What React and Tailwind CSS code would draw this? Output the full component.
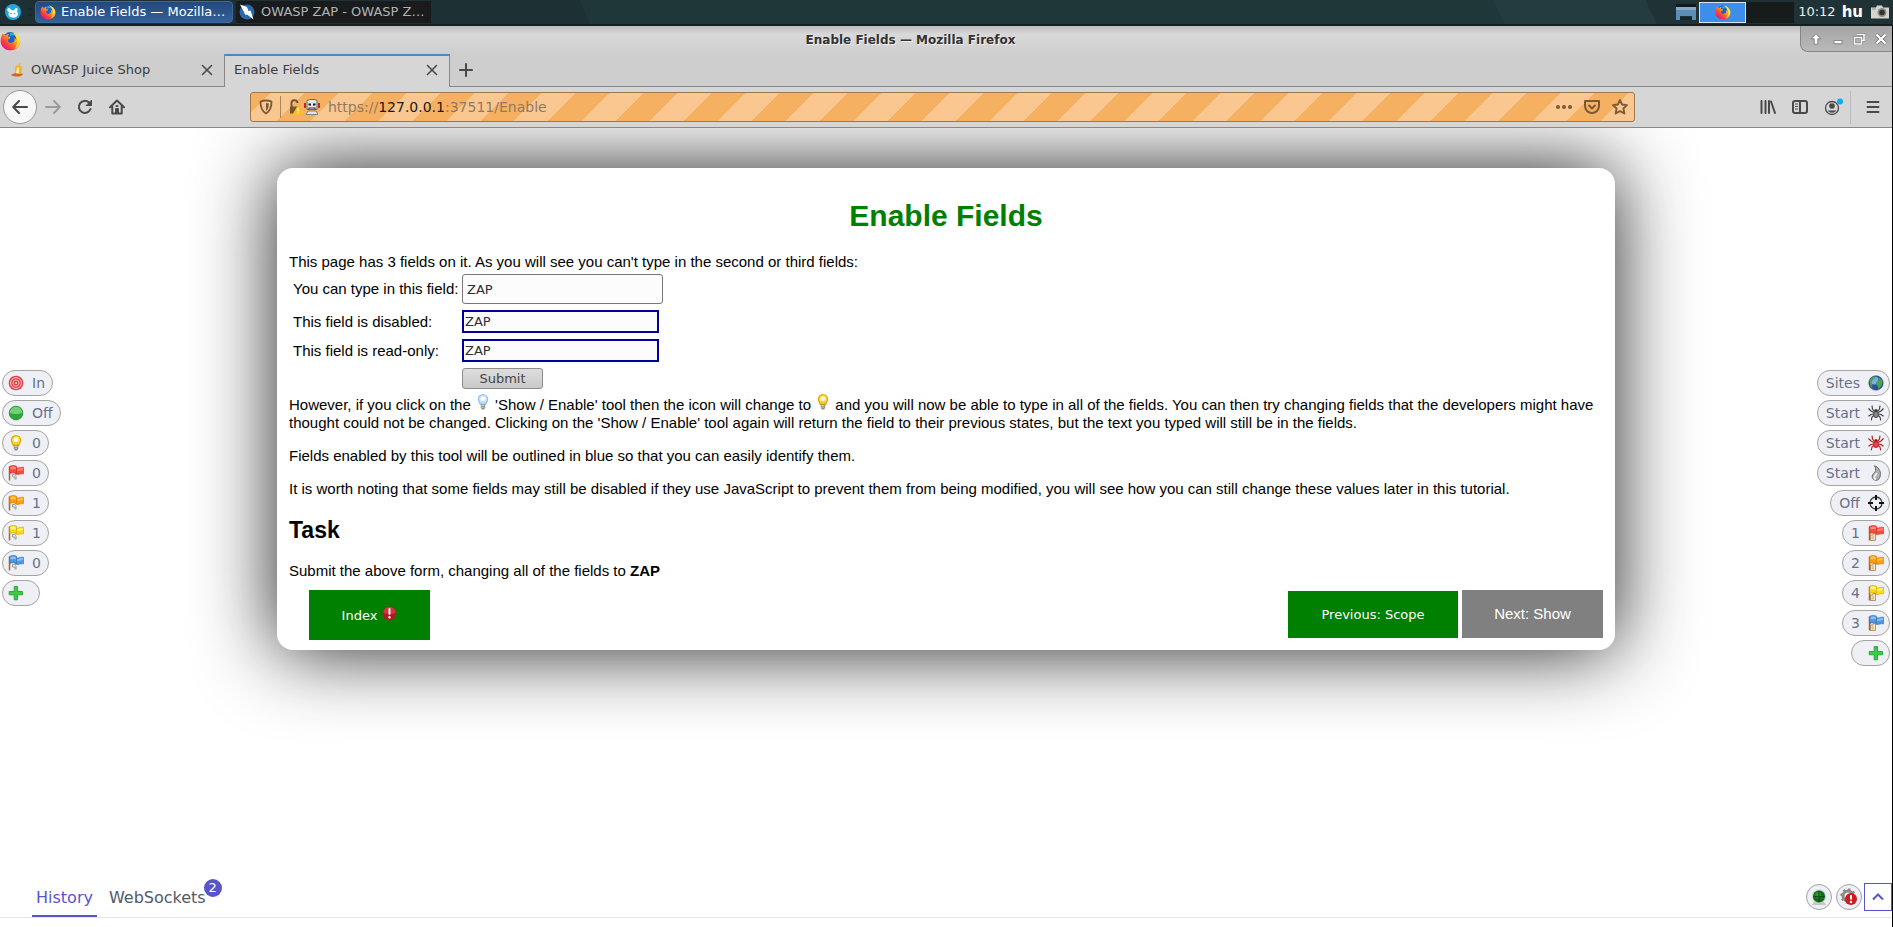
import React from "react";

const stroke = { fill: "none", stroke: "#4a4a4a", strokeWidth: 2, strokeLinecap: "round", strokeLinejoin: "round" };

function Firefox({ size = 16 }) {
  return (
    <svg width={size} height={size} viewBox="0 0 32 32" aria-hidden="true" className="shrink-0">
      <defs>
        <linearGradient id="fx-body" x1="0.9" y1="0.1" x2="0.15" y2="0.9">
          <stop offset="0" stopColor="#fff23a" />
          <stop offset="0.4" stopColor="#ff9a1e" />
          <stop offset="0.75" stopColor="#ff3b3f" />
          <stop offset="1" stopColor="#e0128a" />
        </linearGradient>
      </defs>
      <circle cx="16" cy="15" r="12" fill="#1b62c9" />
      <path d="M16 4a11 11 0 0 1 9 6l-5-2-6 1z" fill="#2aa7f0" />
      <path d="M4 5c1 1 2 2 4 3 1-1 4-2 6-2-1 1-2 2-2 4l4 1c0 2-2 3-4 4 0 4 4 6 7 4 3-1 4-4 3-7 2 1 2 2 3 3 0-5-3-9-7-12 6 1 13 7 13 14 0 8-7 14-15 14S1 25 1 17c0-5 1-8 3-12z" fill="url(#fx-body)" />
      <path d="M23 5c5 3 8 8 7 14-1 5-4 8-8 10 4-5 6-12 1-24z" fill="#ffe53b" opacity="0.8" />
    </svg>
  );
}

function MouseLogo() {
  return (
    <svg width="16" height="16" viewBox="0 0 16 16" aria-hidden="true" className="shrink-0">
      <circle cx="8" cy="8" r="8" fill="#25a6dc" />
      <path d="M2.500 5c.5-1.500 2-1.500 3 0L7 6.500c.8-.3 1.500-.3 2.200 0 .3-2 1.800-3 2.800-2.200 1 .8.700 2.200-.2 2.900 1.400 1 1.800 3 .7 4.500-1 1.300-2.500 1.800-4.500 1.800s-4.500-1-4.500-3.300c0-1 .2-1.500.7-2.200C3 7.500 2 6.500 2.500 5z" fill="#fff" />
      <circle cx="6" cy="9.500" r="0.800" fill="#25a6dc" />
      <circle cx="9.500" cy="9.500" r="0.800" fill="#25a6dc" />
    </svg>
  );
}

function ZapLogo() {
  return (
    <svg width="16" height="16" viewBox="0 0 16 16" aria-hidden="true" className="shrink-0">
      <circle cx="8" cy="8" r="7.500" fill="#2a69ae" />
      <path d="M1 .5l7 2.500 1.500 4 2-.5 3 9-6.500-5-1.500.5z" fill="#fff" />
    </svg>
  );
}

function JuiceLogo() {
  return (
    <svg width="14" height="14" viewBox="0 0 14 14" aria-hidden="true">
      <path d="M5 2.500h2L8.500 0l1 .5L8.500 3h2v8H4V6z" fill="#f0b429" />
      <path d="M6 4.500h2V10H5z" fill="#ffe9a0" />
      <path d="M0 12c1.500-1.500 3-1 4-2 2 1.500 5 1 7.500.5 1 1.500-1.500 3-5 3-2 0-4.500 0-6.500-1.500z" fill="#d5602f" />
    </svg>
  );
}

function Close() {
  return (
    <svg width="12" height="12" viewBox="0 0 12 12" aria-hidden="true">
      <path d="M1.500 1.500l9 9M10.500 1.500l-9 9" stroke="#4a4a4a" strokeWidth="1.600" strokeLinecap="round" />
    </svg>
  );
}

function Bulb({ on, size = 16 }) {
  const edge = on ? "#e2a800" : "#8fc1ee";
  const fill = on ? "#ffe23c" : "#d3e8ff";
  return (
    <svg width={size} height="16" viewBox="0 0 16 16" role="img" aria-label={on ? "lit bulb" : "unlit bulb"} className="inline-block align-baseline">
      <path d="M8 .7a4.600 4.600 0 0 1 4.600 4.600c0 1.800-1.400 2.500-1.900 5.200H5.300C4.800 7.800 3.400 7.100 3.400 5.300A4.600 4.600 0 0 1 8 .7z" fill={fill} stroke={edge} strokeWidth="1.300" />
      <circle cx="8" cy="4.800" r="2.400" fill="#fff" />
      <path d="M6.800 10V7M9.200 10V7" stroke={edge} strokeWidth=".7" />
      <path d="M5.800 10.500h4.400v3.200L9 15.500H7l-1.200-1.800z" fill="#8c8c84" />
      <path d="M6.300 11.500h3M6.300 13.200h3" stroke="#e8e8e2" strokeWidth=".7" />
    </svg>
  );
}

const flagColors = {
  red: ["#fb4a3e", "#ff8d7c", "#d9291c"],
  orange: ["#ff9d0a", "#ffc35c", "#d97800"],
  yellow: ["#ffd90a", "#fff4a0", "#d0a500"],
  blue: ["#4f97e0", "#8fc0f3", "#2a6cb8"],
};

function Flag({ color, site }) {
  const [base, light, dark] = flagColors[color];
  return (
    <svg width="16" height="16" viewBox="0 0 16 16" aria-hidden="true">
      <path d="M1.500 1.500v14" stroke="#a8642a" strokeWidth="1.500" />
      <path d="M7 2.500c3 1.500 5-.7 8.500-.3v6.600c-3-.6-5.500 1.500-8.500.2z" fill={base} stroke={dark} strokeWidth=".6" />
      <path d="M1.800 1.200C4 .2 6.500.2 8.500 1.200v7.200C6.500 7.300 4 7.500 1.800 8.500z" fill={base} stroke={dark} strokeWidth=".6" />
      <path d="M2.500 2.200c2-.8 3.600-.8 5.300 0v2.300c-1.800-.7-3.500-.6-5.300.1zM9.200 4c2 .4 3.600-.8 5.600-.9v2c-2 0-3.600 1.300-5.600.9z" fill={light} />
      {site ? (
        <g>
          <path d="M2.500 10h2.500V8.500h2.500V15.500h-5z" fill="#f6e8c8" stroke="#a37b42" strokeWidth=".8" />
          <path d="M3.500 12h2.500M3.500 13.800h2.500" stroke="#b98f55" strokeWidth=".7" />
        </g>
      ) : (
        <path d="M4.500 9.500h2l1.500 1.800v3.200M4.500 9.500v2.500h2.500v2.500" fill="#fff" stroke="#84918c" strokeWidth=".9" />
      )}
    </svg>
  );
}

function Plus() {
  return (
    <svg width="16" height="16" viewBox="0 0 16 16" aria-hidden="true">
      <path d="M6.200 1.500h3.300V6.500h5v3.300h-5v5H6.200v-5H1.200V6.500h5z" fill="#3ecb45" stroke="#159a20" strokeWidth=".8" />
    </svg>
  );
}

function Target() {
  return (
    <svg width="16" height="16" viewBox="0 0 16 16" aria-hidden="true">
      <circle cx="8" cy="8" r="7.300" fill="#e03c40" />
      <circle cx="8" cy="8" r="5.400" fill="none" stroke="#fbd9d7" strokeWidth="1" />
      <circle cx="8" cy="8" r="3.100" fill="none" stroke="#fbd9d7" strokeWidth="1" />
      <circle cx="8" cy="8" r=".9" fill="#fff" />
    </svg>
  );
}

function GreenBall() {
  return (
    <svg width="16" height="16" viewBox="0 0 16 16" aria-hidden="true">
      <circle cx="8" cy="8" r="7" fill="#2fa53c" />
      <path d="M1.600 8a6.400 6.400 0 0 1 12.800 0c-4 1.200-8.800 1.200-12.800 0z" fill="#72cf75" />
      <circle cx="8" cy="8" r="6.800" fill="none" stroke="#1e8b2f" strokeWidth=".7" />
    </svg>
  );
}

function Globe() {
  return (
    <svg width="16" height="16" viewBox="0 0 16 16" aria-hidden="true">
      <circle cx="8" cy="8" r="7.200" fill="#2f4f9e" />
      <circle cx="6.500" cy="5.500" r="4" fill="#7fabea" />
      <path d="M2 4.500C3.500 2.300 5 1.300 7.500 1.300L7 3 5 4.500 4 6.500 3 8l1.500 2-.5 3C2.500 11.500 1 8 2 4.500zM9.500 2c3.200.8 5.200 3.500 5.200 6L12.500 12l-2 2-1-3.500L7.500 9 9 6l2.500-1z" fill="#46a648" />
      <circle cx="8" cy="8" r="7.200" fill="none" stroke="#27406f" strokeWidth=".6" />
    </svg>
  );
}

function Spider({ color, body }) {
  return (
    <svg width="16" height="16" viewBox="0 0 16 16" aria-hidden="true">
      <path d="M6.500 6.500L4.500 4 4 .7M9.500 6.500l2-2.500.5-3.300M6 7.500L3 6 .5 3.500M10 7.500L13 6l2.500-2.500M6 9l-3 .5-2.500 1.800M10 9l3 .5 2.500 1.800M6.500 10L4 12l-.7 3.300M9.500 10l2.500 2 .7 3.300" fill="none" stroke={color} strokeWidth="1.100" />
      <ellipse cx="8" cy="9.500" rx="2.400" ry="3.200" fill={body} stroke={color} strokeWidth=".8" />
      <circle cx="8" cy="5.600" r="1.700" fill={color} />
    </svg>
  );
}

function Flame() {
  return (
    <svg width="16" height="16" viewBox="0 0 16 16" aria-hidden="true">
      <path d="M6.500.7c4 1.500 6.200 5 5.900 9-.2 3.400-2 5.600-4.200 5.600-2.500 0-4.200-1.900-4-4.300.2-2 2-2.600 3-4.200 1-1.600.4-4-.7-6.100z" fill="#b0b0b0" stroke="#666" strokeWidth="1" />
      <path d="M8.500 8c.3 2-2.200 2.500-2.200 4.200 0 1.200.7 2 1.700 2" fill="none" stroke="#f8f8f8" strokeWidth="1.500" />
    </svg>
  );
}

function Crosshair() {
  return (
    <svg width="16" height="16" viewBox="0 0 16 16" aria-hidden="true">
      <circle cx="8" cy="8" r="6" fill="none" stroke="#3a3a3a" strokeWidth="1.300" />
      <path d="M8 0v5M8 11v5M0 8h5M11 8h5" stroke="#111" strokeWidth="2" />
    </svg>
  );
}

function Alert({ size = 14 }) {
  return (
    <svg width={size} height={size} viewBox="0 0 14 14" aria-hidden="true" className="mb-1.5">
      <circle cx="7" cy="7" r="6.500" fill="#b5171c" />
      <path d="M1.200 6.500a5.800 5.800 0 0 1 11.600 0c-3 1.200-8 1.200-11.600 0z" fill="#c9383b" />
      <path d="M7 2.800v4.700" stroke="#fff" strokeWidth="1.800" strokeLinecap="round" />
      <circle cx="7" cy="10.500" r="1.100" fill="#fff" />
    </svg>
  );
}

const pill =
  "flex h-[26px] items-center gap-2 rounded-full border border-[#a3a3a3] bg-[#eff0f5] text-[14px] text-[#66708c]";

const leftTools = [
  { text: "In", name: "Scope", icon: <Target /> },
  { text: "Off", name: "Break", icon: <GreenBall /> },
  { text: "0", name: "Show / Enable", icon: <Bulb on /> },
  { text: "0", name: "Page alerts, high", icon: <Flag color="red" /> },
  { text: "1", name: "Page alerts, medium", icon: <Flag color="orange" /> },
  { text: "1", name: "Page alerts, low", icon: <Flag color="yellow" /> },
  { text: "0", name: "Page alerts, informational", icon: <Flag color="blue" /> },
  { text: "", name: "Add tool on the left", icon: <Plus /> },
];

const rightTools = [
  { text: "Sites", name: "Sites tree", icon: <Globe /> },
  { text: "Start", name: "Spider", icon: <Spider color="#3a3a3a" body="#8a8a8a" /> },
  { text: "Start", name: "Ajax spider", icon: <Spider color="#b3151b" body="#e24a4a" /> },
  { text: "Start", name: "Active scan", icon: <Flame /> },
  { text: "Off", name: "Attack mode", icon: <Crosshair /> },
  { text: "1", name: "Site alerts, high", icon: <Flag color="red" site /> },
  { text: "2", name: "Site alerts, medium", icon: <Flag color="orange" site /> },
  { text: "4", name: "Site alerts, low", icon: <Flag color="yellow" site /> },
  { text: "3", name: "Site alerts, informational", icon: <Flag color="blue" site /> },
  { text: "", name: "Add tool on the right", icon: <Plus /> },
];

function Taskbar() {
  return (
    <header className="flex h-[26px] items-center border-b-2 border-[#14201f] bg-[#20363a] bg-[linear-gradient(65deg,#1d3033_0_31%,#20373a_31%_79%,#243c40_79%_87%,#1f3236_87%)] pl-[5px] text-[13px]">
      <button aria-label="Applications"><MouseLogo /></button>
      <span className="ml-[7px] h-2 w-1 border-y-2 border-[#15282a]" />
      <button className="ml-[3px] flex h-[22px] w-[198px] items-center gap-[5px] rounded-sm border border-[#3b6aa0] bg-gradient-to-b from-[#24487a] to-[#34619a] pl-1 text-white">
        <Firefox size={16} />
        <span className="truncate">Enable Fields — Mozilla…</span>
      </button>
      <button className="ml-[3px] flex h-[22px] w-[195px] items-center gap-[6px] bg-[#191b1c] pl-[3px] text-[#b3b3b3]">
        <ZapLogo />
        <span className="truncate">OWASP ZAP - OWASP Z…</span>
      </button>
      <div className="flex-1" />
      <svg width="20" height="16" viewBox="0 0 20 16" aria-hidden="true">
        <path d="M0 0h20v3H0z" fill="#101a1c" />
        <path d="M0 3h20v13h-4v-4H4v4H0z" fill="#5d8cb4" />
        <path d="M0 3h20v3H0z" fill="#86a9c8" />
        <path d="M4 13h12v3H4z" fill="#182629" />
      </svg>
      <button aria-label="Workspace 1" className="ml-[3px] flex h-[21px] w-[47px] items-center justify-center border border-[#d5e4f7] bg-[#3d8eea]">
        <Firefox size={16} />
      </button>
      <button aria-label="Workspace 2" className="h-[21px] w-[48px] bg-[#181b1c]" />
      <span className="ml-1 text-[13px] text-[#e8eded]">10:12</span>
      <span className="ml-[6px] text-[15px] font-bold text-white">hu</span>
      <svg width="18" height="14" viewBox="0 0 18 13" aria-hidden="true" className="mr-1 ml-2">
        <path d="M0 2h5l1-2h5l1 2h6v11H0z" fill="#d4d4d0" />
        <circle cx="11" cy="7" r="4.500" fill="#8b8b88" />
        <circle cx="11" cy="7" r="2.800" fill="#333" />
        <path d="M1 3.500h4" stroke="#8b8b88" />
      </svg>
    </header>
  );
}

function TitleBar() {
  return (
    <div className="flex h-7 items-start bg-gradient-to-b from-[#bdbbbc] via-[#d9d9d9] via-30% to-[#cecece]">
      <div className="pt-1"><Firefox size={21} /></div>
      <p className="flex-1 pt-[7px] text-center text-[12px] leading-[15px] font-bold text-[#333] [text-shadow:1px_1px_0_#f2f2f2]">
        Enable Fields — Mozilla Firefox
      </p>
      <div className="flex h-[26px] w-[92px] items-center justify-around rounded-bl-lg border-b border-l border-[#858585] bg-gradient-to-b from-[#a5a5a5] to-[#b9b9b9] pl-1">
        <button aria-label="Shade">
          <svg width="12" height="12" viewBox="0 0 12 12"><path d="M6 .8l4.800 5H7.800v5.400H4.200V5.800h-3z" fill="#fff" stroke="#666" strokeWidth=".7" /></svg>
        </button>
        <button aria-label="Minimize">
          <svg width="12" height="12" viewBox="0 0 12 12"><path d="M2 7.500h8v3.200H2z" fill="#fff" stroke="#666" strokeWidth=".7" /></svg>
        </button>
        <button aria-label="Restore">
          <svg width="12" height="12" viewBox="0 0 12 12"><path d="M4 1.500h7v6H9M1.500 4.500h7v6.500h-7z" fill="none" stroke="#666" strokeWidth="2.600" /><path d="M4 1.500h7v6H9M1.500 4.500h7v6.500h-7z" fill="none" stroke="#fff" strokeWidth="1.600" /></svg>
        </button>
        <button aria-label="Close window">
          <svg width="12" height="12" viewBox="0 0 12 12"><path d="M1.500 1.500l9 9M10.500 1.500l-9 9" stroke="#666" strokeWidth="3.600" /><path d="M1.500 1.500l9 9M10.500 1.500l-9 9" stroke="#fff" strokeWidth="2.400" /></svg>
        </button>
      </div>
    </div>
  );
}

function TabStrip() {
  return (
    <nav aria-label="Browser tabs" className="flex h-[33px] bg-[#cecece] text-[13px] text-[#3c3c3c]">
      <div className="flex w-56 items-center border-b border-[#888] pr-[11px] pl-[11px]">
        <JuiceLogo />
        <span className="ml-[6px] flex-1">OWASP Juice Shop</span>
        <button aria-label="Close OWASP Juice Shop"><Close /></button>
      </div>
      <div className="flex w-[226px] items-center border-x border-t-2 border-x-[#888] border-t-[#4e86c0] bg-[#d6d6d6] pr-[11px] pb-[3px] pl-[9px]">
        <span className="flex-1">Enable Fields</span>
        <button aria-label="Close Enable Fields"><Close /></button>
      </div>
      <div className="flex flex-1 items-center border-b border-[#888] pl-[9px]">
        <button aria-label="New tab">
          <svg width="14" height="14" viewBox="0 0 14 14"><path d="M7 1v12M1 7h12" stroke="#4a4a4a" strokeWidth="2" strokeLinecap="round" /></svg>
        </button>
      </div>
    </nav>
  );
}

function NavBar() {
  return (
    <div className="flex h-[41px] items-center border-b border-[#888] bg-[#d6d6d6]">
      <button aria-label="Back" className="ml-[3px] flex size-[34px] items-center justify-center rounded-full border border-[#999] bg-[#f8f8f8]">
        <svg width="16" height="16" viewBox="0 0 16 16" {...stroke}><path d="M15 8H1.500M7 2L1.200 8 7 14" /></svg>
      </button>
      <button aria-label="Forward" className="ml-2">
        <svg width="16" height="16" viewBox="0 0 16 16" {...stroke} stroke="#9c9c9c"><path d="M1 8h13.500M9 2l5.800 6L9 14" /></svg>
      </button>
      <button aria-label="Reload" className="ml-4">
        <svg width="16" height="16" viewBox="0 0 16 16" {...stroke}><path d="M13.500 10A6 6 0 1 1 12 3.500l2 2" /><path d="M14.500 1.500v5h-5z" fill="#4a4a4a" strokeWidth="1" /></svg>
      </button>
      <button aria-label="Home" className="ml-4">
        <svg width="16" height="16" viewBox="0 0 16 16" {...stroke}><path d="M1 8.200L8 1.500l7 6.700M3.300 7.500V14.500h9.400V7.500" /><path d="M7 14v-4h2v4M7.500 7h1" /></svg>
      </button>
      <div className="ml-[125px] flex h-[30px] flex-1 items-center rounded-[3px] border border-[#a0764a] bg-[repeating-linear-gradient(-45deg,#f9c78f_0_24px,#f6b061_24px_48px)] pr-[6px] pl-2">
        <svg width="14" height="16" viewBox="0 0 14 16" aria-hidden="true"><path d="M7 1.500c2 0 4 .3 5.500 1 0 5-1 9.500-5.500 12-4.500-2.500-5.500-7-5.500-12 1.500-.7 3.500-1 5.500-1z" fill="none" stroke="#7b5937" strokeWidth="1.800" /><path d="M7 4v8c2-1.500 2.700-4 2.800-7.500z" fill="#7b5937" /></svg>
        <span className="mx-[7px] h-[22px] w-px bg-[#a9855c]" />
        <svg width="16" height="16" viewBox="0 0 16 16" aria-hidden="true"><path d="M3.500 8V4.500a3 3 0 0 1 6-.5" fill="none" stroke="#735532" strokeWidth="2" /><path d="M2 7.500h8v7H2z" fill="#735532" /><path d="M10 6l5.500 9.500h-11z" fill="#ffbf1a" /><path d="M10 9v3.500M10 13.500v1" stroke="#fff" strokeWidth="1.200" /></svg>
        <svg width="16" height="16" viewBox="0 0 16 16" aria-hidden="true"><path d="M3 1.500L6 .5h5l2 1v9H3z" fill="#e3e5ea" stroke="#666b77" /><path d="M0 4h2v5H0zM14 4h2v5h-2z" fill="#d1222b" /><path d="M4.500 4.500h2.500v2H4.500zM9 4.500h2.500v2H9z" fill="#15161a" /><path d="M5 10.500v-1.500h6v1.500" fill="none" stroke="#43362f" strokeWidth="1.200" /><path d="M4 12h8l2 3.500H2z" fill="#e3e5ea" stroke="#666b77" strokeWidth=".8" /></svg>
        <div className="relative ml-2 flex flex-1 items-center text-[14px]">
          <input aria-label="Address" defaultValue="https://127.0.0.1:37511/Enable" className="w-full bg-transparent text-transparent outline-none" />
          <span aria-hidden="true" className="pointer-events-none absolute left-0 text-[#8f7a62]">
            https://<span className="text-[#1d1a16]">127.0.0.1</span>:37511/Enable
          </span>
        </div>
        <div className="flex items-center gap-3">
          <button aria-label="Page actions"><svg width="16" height="16" viewBox="0 0 16 16" fill="#7b5937"><circle cx="2" cy="8" r="2" /><circle cx="8" cy="8" r="2" /><circle cx="14" cy="8" r="2" /></svg></button>
          <button aria-label="Save to Pocket"><svg width="16" height="16" viewBox="0 0 16 16" {...stroke} stroke="#7b5937"><path d="M1 2h14v5a7 7 0 0 1-14 0z" /><path d="M5 6.500l3 3 3-3" /></svg></button>
          <button aria-label="Bookmark"><svg width="16" height="16" viewBox="0 0 16 16" {...stroke} stroke="#7b5937" strokeWidth="1.800"><path d="M8 1l2.100 4.500 4.900.6-3.600 3.400 1 5L8 12.100 3.600 14.500l1-5L1 6.100l4.900-.6z" /></svg></button>
        </div>
      </div>
      <button aria-label="Library" className="ml-[125px]"><svg width="16" height="16" viewBox="0 0 16 16" {...stroke}><path d="M1.500 2v12M5.500 2v12M9 2v12M11 2.500l4 11.500" /></svg></button>
      <button aria-label="Sidebars" className="ml-4"><svg width="16" height="16" viewBox="0 0 16 16" {...stroke}><rect x="1" y="2" width="14" height="12" rx="2" /><path d="M8 2v12" /><path d="M3.500 5h2M3.500 7.500h2M3.500 10h2" strokeWidth="1" /></svg></button>
      <button aria-label="Account" className="ml-4"><svg width="20" height="18" viewBox="0 0 20 18"><circle cx="8" cy="10" r="6.500" fill="none" stroke="#4a4a4a" strokeWidth="1.300" /><circle cx="8" cy="8" r="2.800" fill="#4a4a4a" /><path d="M3.500 12.500h9a5.500 5.500 0 0 1-9 0z" fill="#4a4a4a" /><circle cx="16" cy="3.500" r="3" fill="#00b3f4" /></svg></button>
      <span className="ml-[6px] h-[33px] w-px bg-[#bbb]" />
      <button aria-label="Menu" className="mr-3 ml-[15px]"><svg width="14" height="16" viewBox="0 0 14 16" {...stroke}><path d="M1.500 3h11M1.500 8h11M1.500 13h11" /></svg></button>
    </div>
  );
}

const zapField =
  "h-[23px] w-[197px] border-2 border-[#00009c] bg-[#fcfcfc] px-px font-['DejaVu_Sans',sans-serif] text-[13px] text-[#2e2e2e]";

function Card() {
  return (
    <section className="min-w-0 flex-1 self-start rounded-2xl bg-white px-3 pt-[30px] pb-[10px] font-['Liberation_Sans',Arial,sans-serif] text-[15px] leading-[18px] text-black shadow-[0_0_80px_#000000e0]">
      <h1 className="text-center text-[30px] leading-9 font-bold text-[#008000]">Enable Fields</h1>
      <p className="mt-[19px]">This page has 3 fields on it. As you will see you can't type in the second or third fields:</p>
      <form className="mt-[3px] grid grid-cols-[165px_1fr] items-center gap-x-1 gap-y-[6px] pl-1" onSubmit={(e) => e.preventDefault()}>
        <label htmlFor="field1" className="whitespace-nowrap">You can type in this field:</label>
        <input id="field1" defaultValue="ZAP" className="h-[30px] w-[201px] rounded-[3px] border border-[#777] bg-[#fcfcfc] px-1 font-['DejaVu_Sans',sans-serif] text-[13px] text-[#2e2e2e]" />
        <label htmlFor="field2" className="whitespace-nowrap">This field is disabled:</label>
        <input id="field2" defaultValue="ZAP" className={zapField} />
        <label htmlFor="field3" className="whitespace-nowrap">This field is read-only:</label>
        <input id="field3" defaultValue="ZAP" className={zapField} />
        <button type="submit" className="col-start-2 h-[21px] w-[81px] rounded-[3px] border border-[#8c8c8c] bg-gradient-to-b from-[#dedede] to-[#c9c9c9] font-['DejaVu_Sans',sans-serif] text-[13px] leading-[18px] text-[#444]">Submit</button>
      </form>
      <p className="mt-[5px]">
        However, if you click on the <Bulb size={16} /> 'Show / Enable' tool then the icon will change to <Bulb on size={16} /> and you will now be able to type in all of the fields. You can then try changing fields that the developers might have thought could not be changed. Clicking on the 'Show / Enable' tool again will return the field to their previous states, but the text you typed will still be in the fields.
      </p>
      <p className="mt-[15px]">Fields enabled by this tool will be outlined in blue so that you can easily identify them.</p>
      <p className="mt-[15px]">It is worth noting that some fields may still be disabled if they use JavaScript to prevent them from being modified, you will see how you can still change these values later in this tutorial.</p>
      <h2 className="mt-[19px] text-[23px] leading-[26px] font-bold">Task</h2>
      <p className="mt-[19px]">Submit the above form, changing all of the fields to <b>ZAP</b></p>
      <div className="mt-[10px] flex items-start gap-1 pl-5 font-['DejaVu_Sans',sans-serif] text-[13px] text-white">
        <button className="flex h-[50px] w-[121px] items-center justify-center gap-[5px] bg-[#008000] pt-0.5">Index <Alert size={15} /></button>
        <div className="flex-1" />
        <button className="mt-px h-[47px] w-[170px] bg-[#008000]">Previous: Scope</button>
        <button className="h-12 w-[141px] bg-[#808080] font-['Liberation_Sans',Arial,sans-serif] text-[15px]">Next: Show</button>
      </div>
    </section>
  );
}

function HudFooter() {
  return (
    <footer className="relative z-10 mb-[9px] flex items-end border-b border-[#e4e4ea] text-[16px] leading-5 text-[#50596c]">
      <nav aria-label="HUD tabs" className="flex items-end gap-3 pl-8">
        <a href="#history" className="border-b-2 border-[#5755c9] px-1 pb-[7px] text-[#5755c9]">History</a>
        <a href="#websockets" className="relative pb-[9px]">
          WebSockets
          <span className="absolute -top-[9px] -right-4 size-[18px] rounded-full bg-[#5755c9] text-center text-[13px] leading-[18px] text-white">2</span>
        </a>
      </nav>
      <div className="flex-1" />
      <div className="flex items-center gap-1 pb-[7px]">
        <button aria-label="HUD radar" className="flex size-[26px] items-center justify-center rounded-full border border-[#a3a3a3] bg-[#eff0f5]">
          <svg width="16" height="16" viewBox="0 0 16 16"><path d="M3 13h10l2 3H1z" fill="#c5c5c5" /><circle cx="8" cy="7.500" r="7" fill="#c9cdc9" /><circle cx="8" cy="7.500" r="6" fill="#136b1c" /><circle cx="7" cy="6" r="3" fill="#269634" /><path d="M8 2v11M2.500 7.500h11" stroke="#0b4211" strokeWidth=".8" /></svg>
        </button>
        <button aria-label="HUD errors" className="flex size-[26px] items-center justify-center rounded-full border border-[#a3a3a3] bg-[#eff0f5]">
          <svg width="18" height="18" viewBox="0 0 18 18"><circle cx="8" cy="8" r="5" fill="none" stroke="#8b8b85" strokeWidth="3" /><circle cx="8" cy="8" r="6.700" fill="none" stroke="#8b8b85" strokeWidth="2" strokeDasharray="2.200 3.060" /><circle cx="11" cy="11" r="6" fill="#cf1a20" /><path d="M11 7v4.500" stroke="#fff" strokeWidth="2" /><circle cx="11" cy="14" r="1.200" fill="#fff" /></svg>
        </button>
        <button aria-label="Expand" className="-my-px -ml-0.5 flex size-7 items-center justify-center border border-[#5755c9] bg-white">
          <svg width="14" height="8" viewBox="0 0 14 8"><path d="M2 6.500l5-5 5 5" fill="none" stroke="#5755c9" strokeWidth="2" /></svg>
        </button>
      </div>
    </footer>
  );
}

export default function App() {
  return (
    <div className="flex min-h-screen flex-col bg-white font-['DejaVu_Sans',sans-serif]">
      <Taskbar />
      <div className="flex flex-1 flex-col border-r border-black">
        <TitleBar />
        <TabStrip />
        <NavBar />
        <div className="flex flex-1 flex-col overflow-hidden">
          <main className="flex flex-1 pt-10">
            <aside aria-label="Page tools" className="relative z-10 flex w-[277px] shrink-0 flex-col items-start gap-1 pt-[202px] pl-[2px]">
              {leftTools.map((t) => (
                <button key={t.name} aria-label={`${t.name} ${t.text}`} className={`${pill} pr-[7px] pl-[5px]`}>
                  {t.icon}
                  <span>{t.text}</span>
                </button>
              ))}
            </aside>
            <Card />
            <aside aria-label="Site tools" className="relative z-10 flex w-[277px] shrink-0 flex-col items-end gap-1 pt-[202px] pr-[2px]">
              {rightTools.map((t) => (
                <button key={t.name} aria-label={`${t.name} ${t.text}`} className={`${pill} pr-[5px] pl-[8px]`}>
                  <span>{t.text}</span>
                  {t.icon}
                </button>
              ))}
            </aside>
          </main>
          <HudFooter />
        </div>
      </div>
    </div>
  );
}
